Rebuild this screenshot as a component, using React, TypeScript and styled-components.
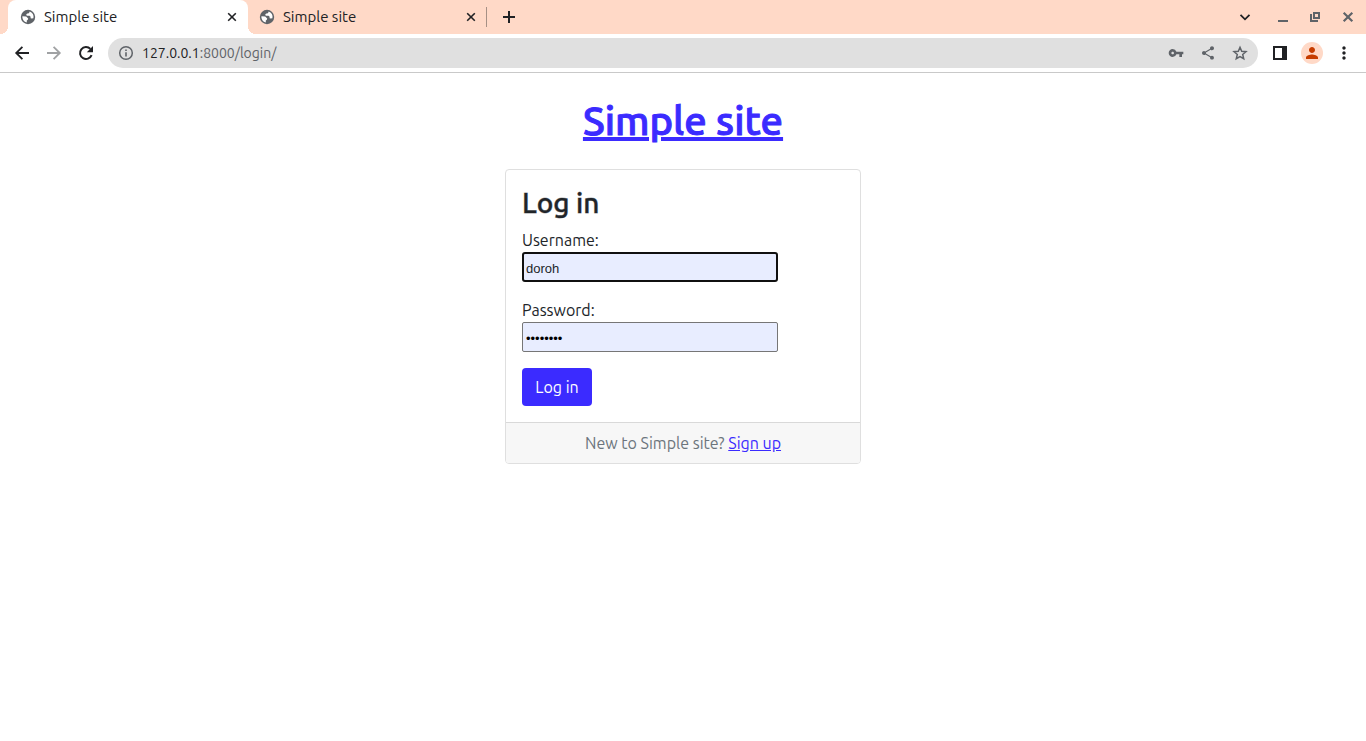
import React from "react";
import styled, { createGlobalStyle, css } from "styled-components";
import { MdVpnKey, MdShare, MdPerson, MdMoreVert } from "react-icons/md";

const uiFont = `Ubuntu, "Noto Sans", "Open Sans", sans-serif`;

const GlobalStyle = createGlobalStyle`
  *, *::before, *::after { box-sizing: border-box; }
  body {
    margin: 0;
    background: #fff;
    color: #212529;
    font-family: ${uiFont};
    font-size: 16px;
    line-height: 24px;
  }
`;

const TabStrip = styled.div`
  display: flex;
  align-items: center;
  height: 34px;
  padding: 0 1px 0 8px;
  background: #ffd9c7;
`;

const Tab = styled.div<{ $active?: boolean }>`
  position: relative;
  display: flex;
  align-items: center;
  gap: 8px;
  width: 240px;
  height: 34px;
  padding: 0 8px 0 12px;
  font-size: 15px;
  border-radius: 8px 8px 0 0;
  ${({ $active }) =>
    $active
      ? css`
          background: #fff;
          &::before, &::after {
            content: "";
            position: absolute;
            bottom: 0;
            width: 8px;
            height: 8px;
          }
          &::before {
            left: -8px;
            background: radial-gradient(circle at 0 0, #ffd9c7 8px, #fff 8px);
          }
          &::after {
            right: -8px;
            background: radial-gradient(circle at 100% 0, #ffd9c7 8px, #fff 8px);
          }
        `
      : css`
          width: 238px;
          padding: 0 7px 0 11px;
        `}
  svg { flex: none; }
`;

const TabTitle = styled.span`
  flex: 1;
  color: #202124;
  white-space: nowrap;
`;

const IconButton = styled.button<{ $width?: number; $color?: string; $round?: boolean }>`
  display: flex;
  align-items: center;
  justify-content: center;
  flex: none;
  width: ${({ $width = 32 }) => $width}px;
  height: ${({ $round }) => ($round ? 22 : 28)}px;
  padding: 0;
  border: 0;
  border-radius: 50%;
  background: ${({ $round }) => ($round ? "#ffd9c7" : "transparent")};
  color: ${({ $color = "#202124" }) => $color};
`;

const Divider = styled.div`
  width: 1px;
  height: 20px;
  background: #a69085;
`;

const WindowControls = styled.div`
  display: flex;
  margin-left: auto;
`;

const Toolbar = styled.div`
  display: flex;
  align-items: center;
  height: 39px;
  padding: 0 6px;
  border-bottom: 1px solid #c9c9c9;
  background: #fff;
`;

const AddressBar = styled.div`
  display: flex;
  align-items: center;
  flex: 1;
  min-width: 0;
  height: 30px;
  margin: 0 6px;
  padding: 0 2px 0 10px;
  border-radius: 15px;
  background: #e0e0e0;
  color: #5f6368;
`;

const Address = styled.div`
  flex: 1;
  margin-left: 8px;
  font-size: 14px;
  overflow: hidden;
  white-space: nowrap;
  b { color: #202124; font-weight: 400; }
`;

const Actions = styled.div`
  display: flex;
  align-items: center;
  gap: 5px;
`;

const Page = styled.main`
  max-width: 1140px;
  margin: 0 auto;
  padding: 24px 12px;
`;

const Link = styled.a`
  color: #3b2bff;
  text-decoration: underline;
`;

const SiteTitle = styled.h1`
  margin: 0 0 24px;
  font-size: 40px;
  font-weight: 500;
  line-height: 48px;
  text-align: center;
  -webkit-text-stroke: 1px #3b2bff;
`;

const Columns = styled.div`
  display: grid;
  grid-template-columns: 1fr minmax(290px, 1fr) 1fr;
  gap: 24px;
`;

const Card = styled.section`
  grid-column: 2;
  border: 1px solid #dfdfdf;
  border-radius: 4px;
  overflow: hidden;
`;

const CardBody = styled.form`
  display: flex;
  flex-direction: column;
  align-items: flex-start;
  padding: 16px;
`;

const CardTitle = styled.h2`
  margin: 0 0 8px;
  font-size: 28px;
  font-weight: 500;
  line-height: 34px;
  -webkit-text-stroke: 1px rgba(33, 37, 41, 0.45);
`;

const Field = styled.div`
  width: 256px;
  max-width: 100%;
  margin-bottom: 16px;
`;

const Label = styled.label`
  display: block;
`;

const TextInput = styled.input<{ $focused?: boolean }>`
  display: block;
  width: 100%;
  height: 30px;
  padding: ${({ $focused }) => ($focused ? "2px 2px 0" : "3px 3px 1px")};
  border: ${({ $focused }) => ($focused ? "2px solid #101010" : "1px solid #767676")};
  border-radius: ${({ $focused }) => ($focused ? 3 : 2)}px;
  outline: 0;
  background: #e8edff;
  color: ${({ $focused }) => ($focused ? "#212529" : "#000")};
  font-family: "Liberation Sans", Arial, sans-serif;
  font-size: 13px;
`;

const SubmitButton = styled.button`
  min-width: 70px;
  height: 38px;
  padding: 0 12px;
  border: 0;
  border-radius: 4px;
  background: #3b2bff;
  color: #fff;
  font: inherit;
`;

const CardFooter = styled.footer`
  padding: 8px 16px;
  border-top: 1px solid #d9d9d9;
  background: #f7f7f7;
  color: #6c757d;
  text-align: center;
`;

const GlobeIcon = () => (
  <svg width="16" height="16" viewBox="0 0 16 16">
    <circle cx="8" cy="8" r="7.2" fill="#5f6368" />
    <path
      fill="#fff"
      d="M9.6 2.4 9.4 3.6 8.3 4.4H7.2L6.2 5.6 6.8 6.8H9.6L10.6 7.8V9.2L11.8 9.6 13.4 9.2A5.7 5.7 0 0 0 9.6 2.4zM2.4 7.2 6.2 7.5 8.2 9.4 7.8 10.8 6.8 11.4V13.6A5.7 5.7 0 0 1 2.4 7.2z"
    />
  </svg>
);

type StrokeProps = { d: string; width?: number };

const StrokeIcon = ({ d, width = 2 }: StrokeProps) => (
  <svg width="16" height="16" viewBox="0 0 16 16" fill="none" stroke="currentColor" strokeWidth={width}>
    <path d={d} />
  </svg>
);

const tabCross = "M4.2 4.2l7.6 7.6M11.8 4.2l-7.6 7.6";
const backArrow = "M15 8H2.4M8.4 1.8L2.2 8l6.2 6.2";
const forwardArrow = "M1 8h12.6M7.6 1.8L13.8 8l-6.2 6.2";

const ReloadIcon = () => (
  <svg width="16" height="16" viewBox="0 0 16 16">
    <path d="M13.6 10.2A6 6 0 1 1 12.4 3.9" fill="none" stroke="currentColor" strokeWidth="2" />
    <path d="M15 1v6.2H8.8z" fill="currentColor" />
  </svg>
);

const InfoIcon = () => (
  <svg width="16" height="16" viewBox="0 0 16 16">
    <circle cx="8" cy="8" r="6.3" fill="none" stroke="currentColor" strokeWidth="1.5" />
    <path d="M7.2 7.2h1.6v4.4H7.2zM7.2 4.4h1.6V6H7.2z" fill="currentColor" />
  </svg>
);

const starOutline = "M8 2.3l1.7 4 4.3.4-3.3 2.8 1 4.2L8 11.5l-3.7 2.2 1-4.2L2 6.7l4.3-.4z";

const SidePanelIcon = () => (
  <svg width="16" height="16" viewBox="0 0 16 16">
    <path fill="currentColor" fillRule="evenodd" d="M1 1h14v14H1zM3 3v10h7V3z" />
  </svg>
);

export default function App() {
  return (
    <>
      <GlobalStyle />
      <header>
        <TabStrip>
          <Tab $active>
            <GlobeIcon />
            <TabTitle>Simple site</TabTitle>
            <IconButton $width={16} aria-label="Close tab"><StrokeIcon d={tabCross} width={1.6} /></IconButton>
          </Tab>
          <Tab>
            <GlobeIcon />
            <TabTitle>Simple site</TabTitle>
            <IconButton $width={16} aria-label="Close tab"><StrokeIcon d={tabCross} width={1.6} /></IconButton>
          </Tab>
          <Divider />
          <IconButton $width={44} aria-label="New tab"><StrokeIcon d="M8 2v12M2 8h12" /></IconButton>
          <WindowControls>
            <IconButton $width={44} aria-label="Search tabs"><StrokeIcon d="M3.5 5.8L8 10.3 12.5 5.8" width={1.8} /></IconButton>
            <IconButton $color="#5f6368" aria-label="Minimize"><StrokeIcon d="M3 12h10" /></IconButton>
            <IconButton $color="#5f6368" aria-label="Restore"><StrokeIcon d="M7 4h5v5H7zM4 5v7h7" /></IconButton>
            <IconButton $width={34} $color="#5f6368" aria-label="Close window">
              <StrokeIcon d="M3.7 3.7l8.6 8.6M12.3 3.7l-8.6 8.6" width={2.2} />
            </IconButton>
          </WindowControls>
        </TabStrip>
        <Toolbar>
          <IconButton aria-label="Back"><StrokeIcon d={backArrow} width={1.8} /></IconButton>
          <IconButton $color="#a0a2a4" aria-label="Forward"><StrokeIcon d={forwardArrow} width={1.8} /></IconButton>
          <IconButton aria-label="Reload"><ReloadIcon /></IconButton>
          <AddressBar>
            <InfoIcon />
            <Address><b>127.0.0.1</b>:8000/login/</Address>
            <IconButton $color="#5f6368" aria-label="Passwords"><MdVpnKey size={16} /></IconButton>
            <IconButton $color="#5f6368" aria-label="Share"><MdShare size={16} /></IconButton>
            <IconButton $color="#5f6368" aria-label="Bookmark"><StrokeIcon d={starOutline} width={1.5} /></IconButton>
          </AddressBar>
          <Actions>
            <IconButton aria-label="Side panel"><SidePanelIcon /></IconButton>
            <IconButton $width={22} $round $color="#c63d00" aria-label="Profile"><MdPerson size={18} /></IconButton>
            <IconButton aria-label="Menu"><MdMoreVert size={20} /></IconButton>
          </Actions>
        </Toolbar>
      </header>
      <Page>
        <SiteTitle><Link href="#home">Simple site</Link></SiteTitle>
        <Columns>
          <Card>
            <CardBody>
              <CardTitle>Log in</CardTitle>
              <Field>
                <Label htmlFor="username">Username:</Label>
                <TextInput id="username" $focused defaultValue="doroh" />
              </Field>
              <Field>
                <Label htmlFor="password">Password:</Label>
                <TextInput id="password" type="password" defaultValue="password" />
              </Field>
              <SubmitButton type="submit">Log in</SubmitButton>
            </CardBody>
            <CardFooter>New to Simple site? <Link href="#signup">Sign up</Link></CardFooter>
          </Card>
        </Columns>
      </Page>
    </>
  );
}
